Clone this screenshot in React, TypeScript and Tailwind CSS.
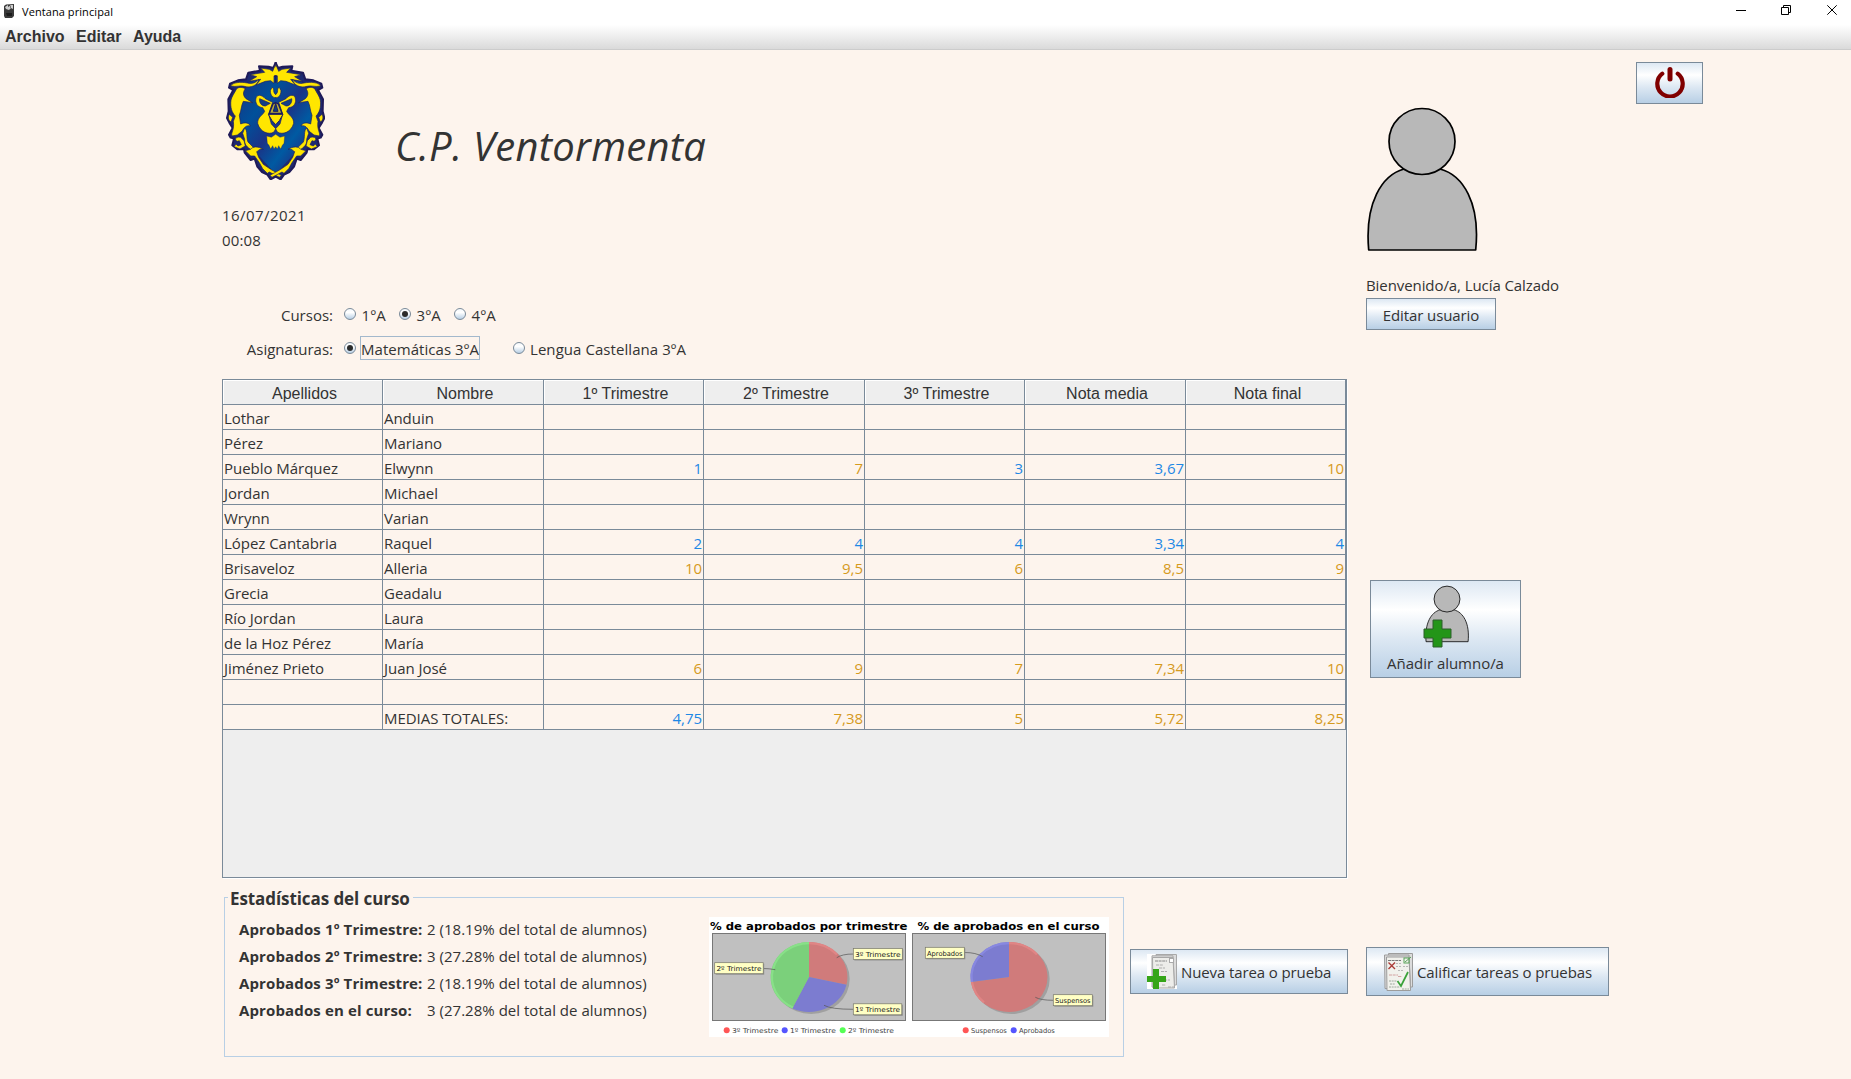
import type { ReactNode } from "react";

const GRID = "grid grid-cols-[160px_161px_160px_161px_160px_161px_160px]";
const HEADERS = ["Apellidos", "Nombre", "1º Trimestre", "2º Trimestre", "3º Trimestre", "Nota media", "Nota final"];

const ROWS: string[][] = [
  ["Lothar", "Anduin", "", "", "", "", ""],
  ["Pérez", "Mariano", "", "", "", "", ""],
  ["Pueblo Márquez", "Elwynn", "1", "7", "3", "3,67", "10"],
  ["Jordan", "Michael", "", "", "", "", ""],
  ["Wrynn", "Varian", "", "", "", "", ""],
  ["López Cantabria", "Raquel", "2", "4", "4", "3,34", "4"],
  ["Brisaveloz", "Alleria", "10", "9,5", "6", "8,5", "9"],
  ["Grecia", "Geadalu", "", "", "", "", ""],
  ["Río Jordan", "Laura", "", "", "", "", ""],
  ["de la Hoz Pérez", "María", "", "", "", "", ""],
  ["Jiménez Prieto", "Juan José", "6", "9", "7", "7,34", "10"],
  ["", "", "", "", "", "", ""],
  ["", "MEDIAS TOTALES:", "4,75", "7,38", "5", "5,72", "8,25"],
];

const STATS = [
  ["Aprobados 1º Trimestre:", "2 (18.19% del total de alumnos)"],
  ["Aprobados 2º Trimestre:", "3 (27.28% del total de alumnos)"],
  ["Aprobados 3º Trimestre:", "2 (18.19% del total de alumnos)"],
  ["Aprobados en el curso:", "3 (27.28% del total de alumnos)"],
];

function gradeColor(value: string) {
  return parseFloat(value.replace(",", ".")) < 5 ? "text-[#1e88e5]" : "text-[#d59a1e]";
}

function MetalButton({ className, children }: { className: string; children: ReactNode }) {
  return (
    <button
      className={`flex border border-[#7a8a99] bg-[linear-gradient(to_bottom,#dde8f3_0%,#ffffff_30%,#dde8f3_60%,#b8cfe5_100%)] whitespace-nowrap ${className}`}
    >
      {children}
    </button>
  );
}

function Radio({ checked = false }: { checked?: boolean }) {
  return (
    <span className="mt-[5px] flex size-[12px] shrink-0 items-center justify-center rounded-full border border-[#7a8a99] bg-[linear-gradient(to_bottom,#f4f8fc,#ffffff_35%,#b8cfe5)]">
      {checked && <span className="size-[6px] rounded-full bg-[#2b2b2b]" />}
    </span>
  );
}

function LionHalf() {
  return (
    <g fill="#ffe600" stroke="#1c1c5e" strokeWidth="2" strokeLinejoin="round">
      <path d="M197 42 L188 64 L178 58 L152 54 L164 67 L120 74 L140 80 L117 94 L152 88 L138 105 L166 94 L182 92 L192 100 L192 78 L197 72Z" />
      <path d="M62 108 C68 97 92 95 112 99 C126 103 138 98 146 88 C144 106 122 115 103 109 C92 105 80 112 62 108Z" />
      <path d="M80 116 C88 110 98 112 106 116 C97 128 100 138 108 146 L128 158 L100 154 C93 168 94 182 88 196 L92 222 C104 216 118 218 121 228 C108 224 102 234 96 244 L82 255 L66 258 C62 248 74 240 70 214 L76 198 C66 188 60 172 63 150 C66 138 74 128 80 116Z" />
      <path d="M58 193 C53 202 55 212 63 216 L68 202Z" />
      <path d="M104 234 C114 242 108 262 114 276 L130 292 L125 300 C112 292 102 284 104 268 L98 250Z" />
      <path d="M92 262 C76 258 72 270 82 274 L88 272 L94 284 L84 288 L78 282 L72 290 L90 297 L106 288 L102 272Z" />
      <path d="M122 298 C128 289 144 288 160 298 C150 294 146 302 140 305 L146 322 L160 343 L182 358 L214 376 L208 382 L178 366 L172 370 L158 356 L148 338 L134 318 L122 318 L106 302Z" />
      <path d="M186 112 L181 122 C181 138 190 143 197 143 V133 C191 131 191 122 191 116Z" />
      <path d="M137 150 C138 130 156 134 166 146 L188 157 L186 162 L176 192 L184 222 L197 236 L192 246 C176 256 150 246 143 220 C142 202 158 196 164 184 L158 173 C146 172 137 164 137 150Z" />
      <path d="M149 146 L181 160 L166 168 C153 168 147 156 149 146Z" fill="#123f86" />
    </g>
  );
}

function LionCrest() {
  const half =
    "M197 38 L190 54 L176 50 L147 49 L150 62 L115 68 L108 88 L84 91 L60 101 L57 113 L70 120 L55 148 L56 184 L51 204 L58 218 L68 234 L57 254 L62 263 L72 266 L67 286 L82 298 L102 298 L104 308 L122 330 L134 326 L142 350 L156 366 L172 374 L182 388 L197 380Z";
  return (
    <svg className="h-[118px] w-[99px] shrink-0" viewBox="48 36 297 354">
      <defs>
        <linearGradient id="crest" x1="0" y1="0" x2="1" y2="1">
          <stop offset="0" stopColor="#1b2f80" />
          <stop offset="0.3" stopColor="#00509a" />
          <stop offset="0.5" stopColor="#1b3386" />
          <stop offset="0.68" stopColor="#005aa2" />
          <stop offset="0.85" stopColor="#1f2f84" />
        </linearGradient>
      </defs>
      <g fill="#1d2a72" stroke="#1f1a58" strokeWidth="6" strokeLinejoin="round">
        <path d={half} />
        <path d={half} transform="translate(394 0) scale(-1 1)" />
      </g>
      <path
        d="M197 80 L120 95 L85 150 L90 220 L105 275 L140 310 L197 372 L254 310 L289 275 L304 220 L309 150 L274 95Z"
        fill="url(#crest)"
      />
      <LionHalf />
      <g transform="translate(394 0) scale(-1 1)">
        <LionHalf />
      </g>
      <path d="M197 48 L203 64 V76 H191 V64Z M192 135 H202 V141 H192Z" fill="#ffe600" />
      <path d="M197 76 V98" stroke="#1c1c5e" strokeWidth="5" />
      <path d="M197 158 L189 162 L178 190 H216 L205 162Z" fill="#b9ad35" stroke="#1c1c5e" strokeWidth="4" />
      <path d="M197 160 L190 184 H204Z" fill="#0c3f80" stroke="#1c1c5e" strokeWidth="3" />
      <path d="M175 193 H219 L208 212 L197 224 L186 212Z" fill="#ffe600" stroke="#1c1c5e" strokeWidth="3" />
      <path
        d="M170 258 L184 262 L197 253 L210 262 L224 258 L222 280 L217 286 L212 297 L206 287 L202 297 L197 290 L192 297 L188 287 L182 297 L177 286 L172 280Z"
        fill="#ffe600"
        stroke="#1c1c5e"
      />
    </svg>
  );
}

function Person({ className, stroke }: { className: string; stroke: number }) {
  return (
    <svg className={className} viewBox="0 0 112 145" fill="#b8b8b8" stroke="#000" strokeWidth={stroke}>
      <path d="M2.700 143 C-1.500 96 16 68 38 62 H74 C97 68 114.500 96 109.700 143Z" strokeLinejoin="round" />
      <circle cx="56" cy="34.500" r="33" />
    </svg>
  );
}

function Papers({ graded = false }: { graded?: boolean }) {
  return (
    <svg className={graded ? "h-[38px] w-[29px]" : "h-[35px] w-[30px] bg-white"} viewBox={graded ? "0 0 29 38" : "-1 0 30 35"}>
      {graded ? (
        <g fill="none">
          <g stroke="#9c9c9c" fill="#dcdcdc">
            <path d="M4.500 0.500 H28.500 V34 H6Z" />
            <path d="M0.500 2 H25 L26.500 35.500 H1Z" />
            <path d="M2.500 4 H25 L26.500 37.500 H3Z" fill="#f1f1ec" />
          </g>
          <path d="M4 7.500 H17" stroke="#777" strokeDasharray="3 0.600" />
          <rect x="20" y="5" width="5" height="5" stroke="#5aa55a" />
          <path d="M21 9 L27 4" stroke="#5aa55a" />
          <path d="M4.500 9.500 L11 16 M11 9.500 L4.500 16" stroke="#a93a36" strokeWidth="1.400" />
          <path d="M12 10.500 H17 M12 13.500 H18 M19 13.500 H24 M14 17.500 H19" stroke="#aaa" strokeWidth="0.800" strokeDasharray="2 1" />
          <path d="M5 22 H14 M14 23.500 H18" stroke="#cc9090" strokeWidth="0.800" strokeDasharray="3 0.700" />
          <path d="M5 28 H13 M6 31 H11 M5 34 H16 M18 36 H25" stroke="#8a9a8a" strokeWidth="0.800" strokeDasharray="2 0.700" />
          <path d="M13.500 28 L17 33 L24 19" stroke="#3aa23a" strokeWidth="1.700" />
        </g>
      ) : (
        <g fill="none">
          <g stroke="#a8a8a8" fill="#dcdcdc">
            <path d="M8 0.500 H28.500 V31 H9Z" />
            <path d="M4 1.800 H25 L26.500 33 H4Z" />
            <path d="M4.500 3.500 H25 L26.500 34 H5Z" fill="#ededea" />
          </g>
          <path d="M7 7 H19" stroke="#888" strokeDasharray="3 0.600" />
          <path d="M8 11 H15 M11 14 H17 M13 17.500 H19 M16 26 H22 M14 31 H18 M20 33 H27" stroke="#a8a8a8" strokeWidth="0.900" strokeDasharray="3 0.800" />
          <rect x="21.500" y="4.500" width="4" height="4" fill="#fff" stroke="#aaa" />
          <path d="M5 15 H11 V22 H18 V28 H11 V35 H5 V28 H-1 V22 H5Z" fill="#35a518" />
        </g>
      )}
    </svg>
  );
}

function ChartLabel({ x, y, w, text }: { x: number; y: number; w: number; text: string }) {
  return (
    <g>
      <rect x={x + 1} y={y + 1} width={w} height="11" fill="#8f8f8f" />
      <rect x={x} y={y} width={w} height="11" fill="#ffffc4" stroke="#77776a" strokeWidth="0.700" />
      <text x={x + 1.7} y={y + 8.2} textLength={w - 3.4} lengthAdjust="spacingAndGlyphs" fill="#222">
        {text}
      </text>
    </g>
  );
}

function LegendItem({ x, w, color, text }: { x: number; w: number; color: string; text: string }) {
  return (
    <g>
      <circle cx={x} cy="113.200" r="3" fill={color} />
      <text x={x + 5.2} y="116" textLength={w} lengthAdjust="spacingAndGlyphs" fill="#444">
        {text}
      </text>
    </g>
  );
}

function Charts() {
  return (
    <svg className="h-[120px] w-[400px] bg-white" viewBox="0 0 400 120" fontFamily="DejaVu Sans, sans-serif" fontSize="6.800">
      <g fontSize="10.500" fontWeight="bold" fill="#000">
        <text x="1" y="12.700" textLength="197.500" lengthAdjust="spacingAndGlyphs">% de aprobados por trimestre</text>
        <text x="208.500" y="12.700" textLength="182" lengthAdjust="spacingAndGlyphs">% de aprobados en el curso</text>
      </g>
      <g fill="#c0c0c0" stroke="#777">
        <rect x="3.500" y="16.500" width="193" height="87" />
        <rect x="203.500" y="16.500" width="193" height="87" />
      </g>
      <g fill="#a0a0a0">
        <ellipse cx="102.200" cy="62" rx="38.500" ry="35" />
        <ellipse cx="302.200" cy="62" rx="38.500" ry="35" />
      </g>
      <path d="M100 60 V25 A38.500 35 0 0 1 137.500 67.800Z" fill="#d07b7b" />
      <path d="M100 60 L137.500 67.800 A38.500 35 0 0 1 83.300 91.500Z" fill="#7c7cd0" />
      <path d="M100 60 L83.300 91.500 A38.500 35 0 0 1 100 25Z" fill="#7bd07b" />
      <path d="M300 60 V25 A38.500 35 0 1 1 261.900 65Z" fill="#d07b7b" />
      <path d="M300 60 L261.900 65 A38.500 35 0 0 1 300 25Z" fill="#7c7cd0" />
      <g fill="none" strokeWidth="2.200">
        <path d="M100 26.100 A37.400 33.900 0 0 1 128 37.500" stroke="#e08585" />
        <path d="M84 90.500 A37.400 33.900 0 0 1 100 26.100" stroke="#88e088" />
        <path d="M300 26.100 A37.400 33.900 0 0 1 328 37.500" stroke="#e08585" />
        <path d="M263 65 A37.400 33.900 0 0 1 300 26.100" stroke="#8888e0" />
        <path d="M263 65 A37.400 33.900 0 0 0 275 85.300" stroke="#e08585" />
      </g>
      <g fill="none" stroke="#555" strokeWidth="0.700">
        <path d="M127.700 40.700 Q133 37 144.300 37" />
        <path d="M115 88.300 Q122 92.300 144.300 92.300" />
        <path d="M54.300 51.500 Q60 51.500 66.300 52.700" />
        <path d="M255.700 35.500 Q267 35.500 273.700 39.700" />
        <path d="M326.300 80.300 Q332 83.300 344.300 83.300" />
      </g>
      <ChartLabel x={144.3} y={31.5} w={49} text="3º Trimestre" />
      <ChartLabel x={144.3} y={86.8} w={48.5} text="1º Trimestre" />
      <ChartLabel x={5.7} y={45.7} w={48.5} text="2º Trimestre" />
      <ChartLabel x={216.3} y={30.3} w={39} text="Aprobados" />
      <ChartLabel x={344.3} y={77.7} w={39} text="Suspensos" />
      <LegendItem x={17.7} w={46.5} color="#ff5555" text="3º Trimestre" />
      <LegendItem x={75.7} w={46} color="#5555ff" text="1º Trimestre" />
      <LegendItem x={133.7} w={46} color="#55ff55" text="2º Trimestre" />
      <LegendItem x={256.7} w={36} color="#ff5555" text="Suspensos" />
      <LegendItem x={304.7} w={36} color="#5555ff" text="Aprobados" />
    </svg>
  );
}

function TitleBar() {
  return (
    <header className="flex h-[25px] items-start justify-between bg-white text-black">
      <div className="flex pl-[4px]">
        <svg className="mt-[4px] h-[14px] w-[11px]" viewBox="0 0 11 14">
          <path d="M0 2 L2 0.500 L10 0 V12 L8 14 H1 L0 12Z" fill="#3a3a3a" />
          <path d="M1 3 L4 1 V3 L7 1 H9 V5 L7 4 L5 6 L2 5Z" fill="#cfcfcf" />
          <path d="M6 2.500 H7 V3.500 H6Z M2 9 H8 V12 H3Z" fill="#1c1c1c" />
        </svg>
        <span className="ml-[7px] text-[11px] leading-[24px] tracking-[0.080px]">Ventana principal</span>
      </div>
      <svg className="mr-[13px] mt-[4px] h-[12px] w-[103px]" viewBox="0 0 103 12" fill="none" stroke="#000">
        <path d="M1 6.500 H11" />
        <path d="M46.500 3.500 H53.500 V10.500 H46.500Z M48.500 3.500 V1.500 H55.500 V8.500 H53.500" />
        <path d="M92.300 1.300 L101.700 10.700 M101.700 1.300 L92.300 10.700" />
      </svg>
    </header>
  );
}

function GradesTable() {
  return (
    <div className="h-[499px] w-[1125px] border border-[#7a8a99] bg-[#eeeeee] shadow-[1px_1px_0_#ffffff]">
      <div className={GRID}>
        {HEADERS.map((h) => (
          <div
            key={h}
            className="h-[25px] border-r border-b border-[#7a8a99] bg-[#eeeeee] pl-[4px] text-center font-['Liberation_Sans',sans-serif] text-[16px] leading-[28px] shadow-[inset_1px_1px_0_#ffffff]"
          >
            {h}
          </div>
        ))}
      </div>
      {ROWS.map((row, r) => (
        <div key={r} className={GRID}>
          {row.map((cell, c) => (
            <div
              key={c}
              className={`h-[25px] border-r border-b border-[#7a8a99] bg-[#fdf4ed] px-[1px] leading-[26px] tracking-[-0.030px] whitespace-nowrap ${
                c > 1 ? `text-right ${gradeColor(cell)}` : ""
              }`}
            >
              {cell}
            </div>
          ))}
        </div>
      ))}
    </div>
  );
}

export default function App() {
  return (
    <div className="h-[1079px] w-[1851px] overflow-hidden bg-[#fdf4ed] font-['Open_Sans','Noto_Sans',sans-serif] text-[15px] text-[#333333]">
      <TitleBar />
      <nav className="flex h-[25px] gap-[11.5px] border-b border-[#cccccc] bg-[linear-gradient(to_bottom,#ffffff,#dadada)] pl-[5px] font-['Liberation_Sans',sans-serif] text-[16px] leading-[23px] font-bold">
        <span>Archivo</span>
        <span>Editar</span>
        <span>Ayuda</span>
      </nav>

      <main className="flex pl-[222px]">
        <section className="w-[1125px]">
          <div className="flex h-[153px] pt-[12px] pl-[4px]">
            <LionCrest />
            <h1 className="mt-[56px] ml-[70px] text-[40px] leading-[56px] tracking-[0.280px] italic">C.P. Ventormenta</h1>
          </div>
          <div className="h-[100px] leading-[25px] tracking-[0.450px]">
            <p>16/07/2021</p>
            <p className="tracking-[0.150px]">00:08</p>
          </div>
          <div className="flex h-[34px] leading-[25px]">
            <span className="w-[111px] text-right">Cursos:</span>
            <div className="ml-[11px] flex w-[55px] gap-[5.5px] tracking-[0.300px]"><Radio />1ºA</div>
            <div className="flex w-[55px] gap-[5.5px] tracking-[0.300px]"><Radio checked />3ºA</div>
            <div className="flex w-[55px] gap-[5.5px] tracking-[0.300px]"><Radio />4ºA</div>
          </div>
          <div className="flex h-[42px] leading-[25px]">
            <span className="w-[111px] text-right">Asignaturas:</span>
            <div className="ml-[11px] flex">
              <Radio checked />
              <span className="-mt-px ml-[4px] h-[24px] w-[120px] border border-[#a3b8cc] tracking-[0.050px] whitespace-nowrap">
                Matemáticas 3ºA
              </span>
            </div>
            <div className="ml-[33px] flex gap-[5px] tracking-[0.060px]"><Radio />Lengua Castellana 3ºA</div>
          </div>
          <GradesTable />
        </section>

        <aside className="ml-[19px] w-[340px]">
          <div className="flex justify-between pt-[12px]">
            <Person className="mt-[45px] h-[145px] w-[112px]" stroke={1.7} />
            <MetalButton className="mr-[3px] h-[42px] w-[67px] justify-center pt-[4px]">
              <svg className="h-[31px] w-[30px]" viewBox="0 0 30 31" fill="none" stroke="#800000" strokeLinecap="round">
                <path d="M7.300 6.700 A12.700 12.700 0 1 0 22.700 6.700" strokeWidth="4.200" />
                <path d="M15 2.500 V12" strokeWidth="5" />
              </svg>
            </MetalButton>
          </div>
          <p className="mt-[21px] leading-[25px] tracking-[-0.080px]">Bienvenido/a, Lucía Calzado</p>
          <MetalButton className="h-[32px] w-[130px] justify-center leading-[32px] tracking-[-0.100px]">Editar usuario</MetalButton>
          <MetalButton className="mt-[250px] ml-[4px] h-[98px] w-[151px] flex-col items-center">
            <span className="relative mt-[4px] block h-[62px] w-[45px]">
              <Person className="ml-[2px] h-[58px] w-[44px]" stroke={2} />
              <svg className="absolute top-[34px] left-0 size-[29px]" viewBox="0 0 29 29">
                <path d="M10 1 H19 V10 H28 V19 H19 V28 H10 V19 H1 V10 H10Z" fill="#239518" stroke="#2d5f2a" />
              </svg>
            </span>
            <span className="mt-[4px] leading-[25px] tracking-[-0.030px]">Añadir alumno/a</span>
          </MetalButton>
        </aside>
      </main>

      <footer className="mt-[19px] flex pl-[224px]">
        <div className="relative flex h-[160px] w-[900px] border border-[#b8cfe5]">
          <h2 className="absolute -top-[12px] left-[3px] h-[26px] bg-[#fdf4ed] pr-[3px] pl-[2px] text-[17px] leading-[26px] font-bold tracking-[-0.080px]">
            Estadísticas del curso
          </h2>
          <dl className="mt-[18px] ml-[14px] grid h-[108px] w-[470px] grid-cols-[188px_1fr] leading-[27px]">
            {STATS.map(([k, v]) => (
              <div key={k} className="contents">
                <dt className="font-bold tracking-[0.130px]">{k}</dt>
                <dd className="tracking-[0.020px]">{v}</dd>
              </div>
            ))}
          </dl>
          <div className="mt-[19px]">
            <Charts />
          </div>
        </div>
        <MetalButton className="mt-[52px] ml-[6px] h-[45px] w-[218px] items-center pl-[16px]">
          <Papers />
          <span className="mt-[2px] ml-[4px] tracking-[-0.110px]">Nueva tarea o prueba</span>
        </MetalButton>
        <MetalButton className="mt-[50px] ml-[18px] h-[49px] w-[243px] items-center pl-[17px]">
          <Papers graded />
          <span className="mt-[2px] ml-[4px] tracking-[-0.110px]">Calificar tareas o pruebas</span>
        </MetalButton>
      </footer>
    </div>
  );
}
